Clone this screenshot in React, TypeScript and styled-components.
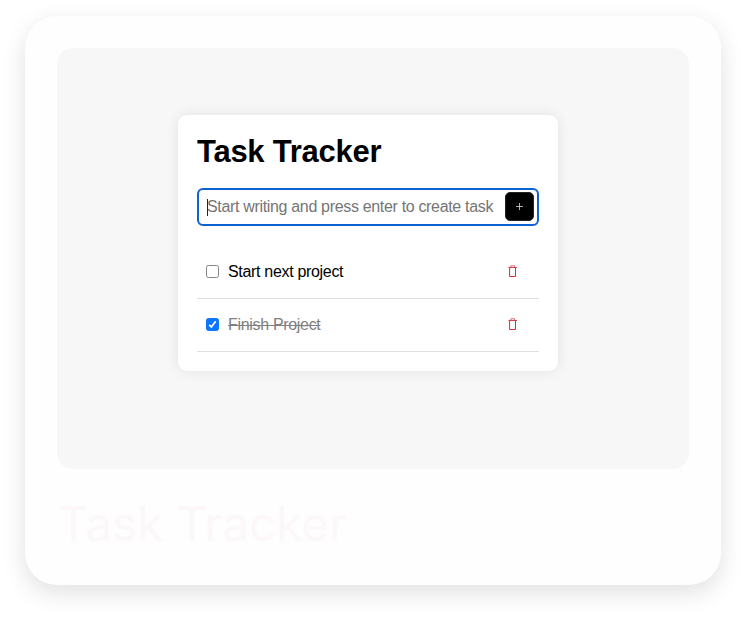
import React from "react";
import styled, { createGlobalStyle } from "styled-components";

const GlobalStyle = createGlobalStyle`
  * { box-sizing: border-box; }
  body { margin: 0; background: #fff; }
`;

const Page = styled.div`
  height: 618px;
  padding: 16px 24px 33px 25px;
  overflow: hidden;
`;

const Card = styled.article`
  height: 569px;
  padding: 32px;
  border-radius: 32px;
  background: #fefefe;
  box-shadow: 0 8px 24px rgba(0, 0, 0, 0.12);
`;

const Preview = styled.div`
  height: 421px;
  padding: 67px 131px 0 121px;
  border-radius: 16px;
  background: #f7f7f7;
`;

const Tracker = styled.section`
  height: 256px;
  padding: 18px 19px 0;
  border-radius: 9px;
  background: #fff;
  box-shadow: 0 0 14px rgba(0, 0, 0, 0.09);
  font-family: "Liberation Sans", Arial, sans-serif;
`;

const Title = styled.h1`
  margin: 0 0 17px;
  font-size: 31px;
  letter-spacing: -0.25px;
  line-height: 38px;
  font-weight: 700;
  color: #000;
  white-space: nowrap;
`;

const Field = styled.div`
  display: flex;
  align-items: center;
  justify-content: space-between;
  height: 38px;
  padding: 0 3px 0 8px;
  border: 2px solid #0c62d0;
  border-radius: 6px;
`;

const Prompt = styled.span`
  display: flex;
  align-items: center;
  font-size: 16px;
  letter-spacing: -0.33px;
  color: #757575;
  white-space: nowrap;
`;

const Caret = styled.i`
  width: 1px;
  height: 17px;
  margin-right: -1px;
  background: #222;
`;

const AddButton = styled.button`
  display: grid;
  place-items: center;
  width: 29px;
  height: 29px;
  margin-bottom: 1px;
  padding: 0;
  border: 1px solid #222;
  border-radius: 5px;
  background: #000;
`;

const List = styled.ul`
  margin: 19px 0 0;
  padding: 0;
  list-style: none;
`;

const Item = styled.li`
  display: flex;
  align-items: center;
  height: 53px;
  padding: 0 21px 0 9px;
  box-shadow: 0 1px 0 #dfdfdf;
`;

const Check = styled.span<{ $on: boolean }>`
  display: grid;
  place-items: center;
  width: 13px;
  height: 13px;
  margin-right: 9px;
  border: 1px solid ${(p) => (p.$on ? "#0a75ff" : "#858585")};
  border-radius: 2.5px;
  background: ${(p) => (p.$on ? "#0a75ff" : "#fff")};
`;

const Label = styled.span<{ $done: boolean }>`
  flex: 1;
  font-size: 16px;
  letter-spacing: -0.32px;
  color: ${(p) => (p.$done ? "#808080" : "#000")};
  text-decoration: ${(p) => (p.$done ? "line-through" : "none")};
`;

const Caption = styled.h2`
  margin: 26px 0 0;
  padding-left: 1px;
  font-family: Inter, sans-serif;
  font-size: 48px;
  letter-spacing: -0.25px;
  line-height: 58px;
  font-weight: 400;
  color: #fcf8f9;
  white-space: nowrap;
`;

const Plus = () => (
  <svg width="7" height="7" viewBox="0 0 7 7" stroke="#ddd" strokeWidth="0.8">
    <path d="M3.5 0v7M0 3.5h7" />
  </svg>
);

const Tick = () => (
  <svg width="11" height="11" viewBox="0 0 11 11" fill="none" stroke="#fff" strokeWidth="1.8">
    <path d="M2.2 5.8 4.4 8 8.7 2.2" />
  </svg>
);

const Trash = () => (
  <svg width="10" height="13" viewBox="0 0 10 13" fill="none" stroke="#d12f3b">
    <path d="M0.5 2.5h8.5" strokeWidth="0.9" />
    <path d="M2.8 2.3V.8h3.8v1.5" strokeWidth="0.7" />
    <path d="M1.6 2.8v8.7h5.9V2.8" strokeWidth="1" />
  </svg>
);

const tasks = [
  { name: "Start next project", done: false },
  { name: "Finish Project", done: true },
];

export default function App() {
  return (
    <>
      <GlobalStyle />
      <Page>
        <Card>
          <Preview>
            <Tracker>
              <Title>Task Tracker</Title>
              <Field>
                <Prompt>
                  <Caret />
                  Start writing and press enter to create task
                </Prompt>
                <AddButton aria-label="Add task">
                  <Plus />
                </AddButton>
              </Field>
              <List>
                {tasks.map((t) => (
                  <Item key={t.name}>
                    <Check $on={t.done}>{t.done && <Tick />}</Check>
                    <Label $done={t.done}>{t.name}</Label>
                    <Trash />
                  </Item>
                ))}
              </List>
            </Tracker>
          </Preview>
          <Caption>Task Tracker</Caption>
        </Card>
      </Page>
    </>
  );
}
